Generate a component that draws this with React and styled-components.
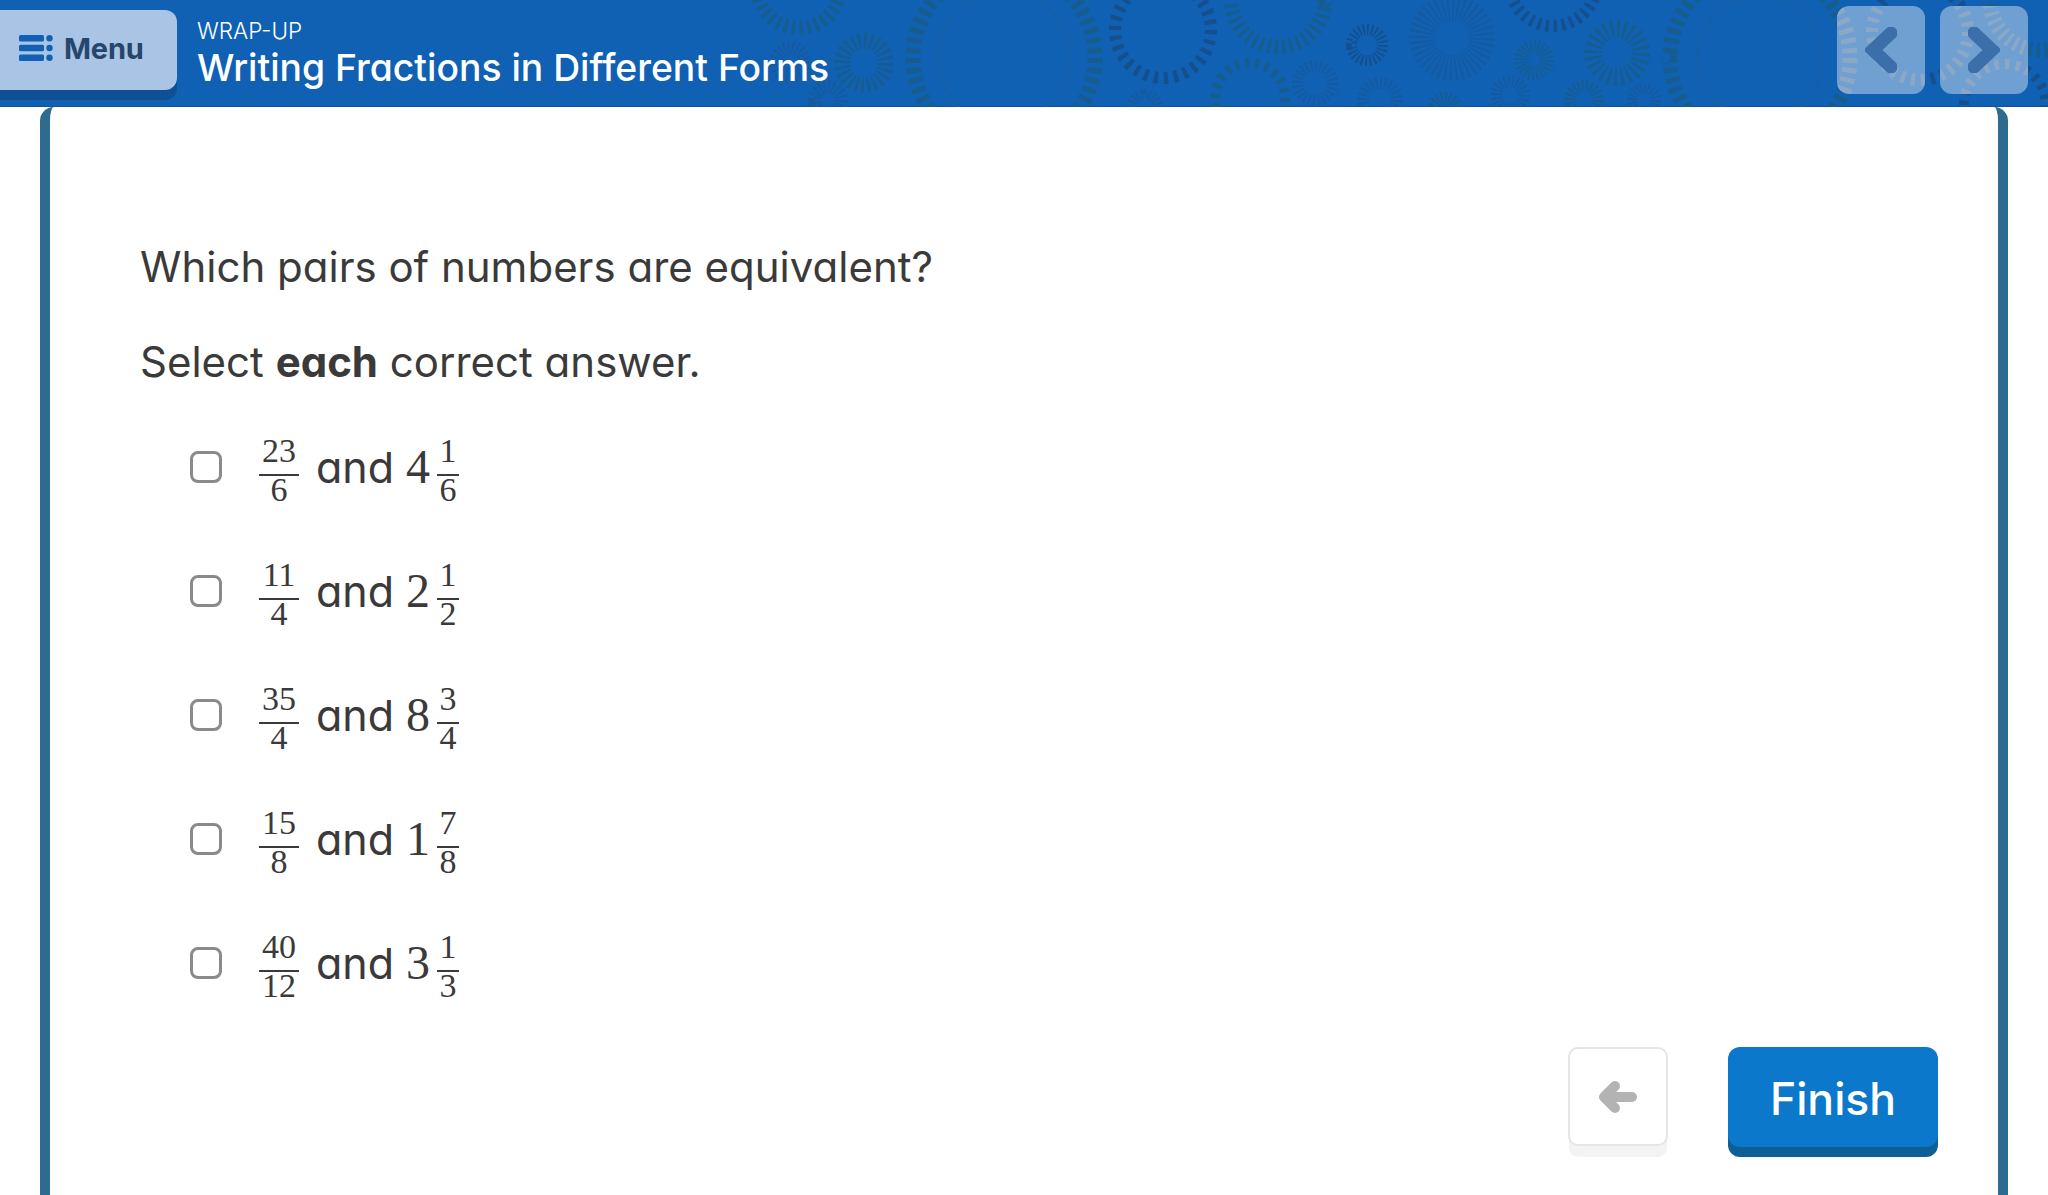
import styled, { createGlobalStyle } from "styled-components";

const GlobalStyle = createGlobalStyle`
  html, body { margin: 0; padding: 0; background: #fff; }
  body { font-family: Inter, "Noto Sans", sans-serif; font-feature-settings: "cv11"; color: #333; }
`;

const Page = styled.div`
  width: 2048px;
  height: 1195px;
  overflow: hidden;
  display: flex;
  flex-direction: column;
`;

const Header = styled.header`
  position: relative;
  flex: none;
  height: 107px;
  background: #1060b3;
  box-shadow: inset 0 -1px 0 #15508f;
  display: flex;
  align-items: flex-start;
  overflow: hidden;
`;

const Pattern = styled.svg`
  position: absolute;
  inset: 0;
`;

const MenuButton = styled.button`
  position: relative;
  flex: none;
  width: 177px;
  height: 80px;
  margin-top: 10px;
  padding: 0 0 4px 19px;
  border: 0;
  border-radius: 0 12px 12px 0;
  background: #a9c4e4;
  box-shadow: 0 10px 0 #0f4f94;
  display: flex;
  align-items: center;
  gap: 11px;
  font: 700 29px Inter, sans-serif;
  letter-spacing: -0.2px;
  color: #27466c;
`;

const TitleBlock = styled.div`
  position: relative;
  margin: 16px 0 0 20px;
  color: #fff;
`;

const Eyebrow = styled.div`
  font-size: 22.5px;
  font-weight: 300;
  line-height: 30px;
`;

const Title = styled.div`
  margin-top: -1px;
  font-size: 37.3px;
  font-weight: 500;
  line-height: 46px;
  white-space: nowrap;
`;

const NavGroup = styled.div`
  position: relative;
  margin: 6px 20px 0 auto;
  display: flex;
  gap: 15px;
`;

const NavButton = styled.button`
  position: relative;
  width: 88px;
  height: 88px;
  padding: 0;
  border: 0;
  border-radius: 12px;
  overflow: hidden;
  background: #70a0d1;
  display: flex;
  align-items: center;
  justify-content: center;
  svg:last-child { position: relative; }
`;

const Card = styled.main`
  flex: 1;
  margin: 0 40px;
  padding: 136px 61px 0 90px;
  border: solid #2f6b8f;
  border-width: 0 10px;
  border-radius: 14px 14px 0 0;
  background: #fff;
`;

const Prompt = styled.p`
  margin: 0 0 47px;
  font-size: 42px;
  line-height: 48px;
  font-weight: 400;
  color: #3a3a3a;
  strong { font-weight: 700; }
`;

const Options = styled.ul`
  list-style: none;
  margin: -28px 0 0;
  padding: 0 0 0 50px;
`;

const Option = styled.li`
  height: 124px;
  display: flex;
  align-items: center;
`;

const Check = styled.span`
  flex: none;
  box-sizing: border-box;
  width: 32px;
  height: 32px;
  margin-right: 37px;
  border: 3px solid #8a8a8a;
  border-radius: 8px;
`;

const Word = styled.span`
  width: 78px;
  margin: 0 12px 0 17px;
  font-size: 43px;
  line-height: 48px;
  color: #3a3a3a;
`;

const Whole = styled.span`
  width: 23px;
  margin-right: 8px;
  font: 48px/48px "Liberation Serif", serif;
  text-align: center;
  color: #3a3a3a;
`;

const Fraction = styled.span`
  width: ${(p) => p.$width}px;
  margin-top: 18px;
  display: flex;
  flex-direction: column;
  align-items: center;
  font: 34px/26px "Liberation Serif", serif;
  color: #3a3a3a;
`;

const Numerator = styled.span`
  align-self: stretch;
  text-align: center;
  border-bottom: 2px solid #3a3a3a;
  height: 36px;
  margin-top: -6px;
`;

const Denominator = styled.span`
  height: 32px;
  padding-top: 1px;
  box-sizing: border-box;
`;

const Footer = styled.div`
  margin-top: 22px;
  display: flex;
  justify-content: flex-end;
  gap: 60px;
`;

const BackButton = styled.button`
  box-sizing: border-box;
  width: 100px;
  height: 99px;
  padding: 0;
  border: 2px solid #e6e6e6;
  border-radius: 10px;
  background: #fff;
  box-shadow: 0 12px 0 -1px #f3f3f3;
  display: flex;
  align-items: center;
  justify-content: center;
`;

const FinishButton = styled.button`
  width: 210px;
  height: 100px;
  margin-right: -1px;
  padding: 3px 0 0;
  border: 0;
  border-radius: 12px;
  background: #0b78cc;
  box-shadow: 0 10px 0 #0e5f96;
  color: #fff;
  font: 500 44.5px Inter, sans-serif;
`;

const teal = "#165d8e";
const navy = "#154f8c";
const soft = "#155aa0";
const faint = "#155fa9";

// [cx, cy, r, radial length, dash count, colour]
const rings = [
  [799, -14, 42, 14, 34, teal],
  [790, 62, 14, 14, 22, soft],
  [864, 63, 22, 16, 24, teal],
  [828, 100, 13, 14, 20, soft],
  [1004, 58, 91, 15, 57, teal],
  [1004, 58, 66, 5, 60, faint],
  [1163, 30, 48, 12, 30, navy],
  [1278, 0, 47, 15, 40, teal],
  [1250, 98, 35, 10, 22, teal],
  [1145, 107, 13, 10, 20, soft],
  [1367, 45, 15.5, 11, 24, navy],
  [1315, 83, 17.5, 11, 24, soft],
  [1380, 100, 17, 12, 24, soft],
  [1452, 38, 30, 26, 40, soft],
  [1553, -18, 44, 12, 34, navy],
  [1534, 60, 13, 14, 24, teal],
  [1617, 53, 24, 18, 24, teal],
  [1510, 95, 14, 12, 22, soft],
  [1584, 100, 14, 12, 22, teal],
  [1644, 100, 12, 10, 20, soft],
  [1445, 110, 12, 12, 20, teal],
  [1760, 58, 90, 15, 57, teal],
  [1760, 58, 62, 5, 60, faint],
  [1920, 32, 48, 12, 30, navy],
  [2040, 0, 50, 15, 40, teal],
  [2005, 105, 41, 10, 24, navy],
];

function Rings({ color }) {
  return rings.map(([cx, cy, r, w, n, tone]) => (
    <circle
      key={`${cx}-${r}`}
      cx={cx}
      cy={cy}
      r={r}
      stroke={color && tone !== faint ? color : tone}
      strokeWidth={w}
      pathLength={n}
      strokeDasharray={r > 60 ? "0.5 0.5" : "0.42 0.58"}
    />
  ));
}

function MenuIcon() {
  return (
    <svg width="34" height="26" viewBox="0 0 34 26" fill="#1060b3">
      <rect x="0" y="0" width="25" height="6.5" rx="1.5" />
      <rect x="0" y="9.7" width="25" height="6.5" rx="1.5" />
      <rect x="0" y="19.5" width="25" height="6.5" rx="1.5" />
      <circle cx="30.5" cy="3.2" r="3.2" />
      <circle cx="30.5" cy="13" r="3.2" />
      <circle cx="30.5" cy="22.8" r="3.2" />
    </svg>
  );
}

function Chevron({ flip }) {
  return (
    <svg width="32" height="46" viewBox="0 0 32 46" fill="none">
      <path
        d={flip ? "M6 6 L24 23 L6 40" : "M26 6 L8 23 L26 40"}
        stroke="#3c6fa9"
        strokeWidth="13"
        strokeLinejoin="miter"
        strokeLinecap="round"
      />
    </svg>
  );
}

function BackArrow() {
  return (
    <svg width="38" height="32" viewBox="0 0 38 32" fill="none" stroke="#b3b3b3" strokeWidth="10" strokeLinecap="round" strokeLinejoin="round">
      <path d="M8 16 H33" />
      <path d="M16 5 L5 16 L16 27" />
    </svg>
  );
}

const items = [
  { n: "23", d: "6", whole: "4", fn: "1", fd: "6" },
  { n: "11", d: "4", whole: "2", fn: "1", fd: "2" },
  { n: "35", d: "4", whole: "8", fn: "3", fd: "4" },
  { n: "15", d: "8", whole: "1", fn: "7", fd: "8" },
  { n: "40", d: "12", whole: "3", fn: "1", fd: "3" },
];

export default function App() {
  return (
    <Page>
      <GlobalStyle />
      <Header>
        <Pattern width="2048" height="107" viewBox="0 0 2048 107" fill="none">
          <Rings />
        </Pattern>
        <MenuButton>
          <MenuIcon />
          Menu
        </MenuButton>
        <TitleBlock>
          <Eyebrow>WRAP-UP</Eyebrow>
          <Title>Writing Fractions in Different Forms</Title>
        </TitleBlock>
        <NavGroup>
          <NavButton>
            <Pattern width="88" height="88" viewBox="1837 6 88 88" fill="none">
              <Rings color="#8ba9c6" />
            </Pattern>
            <Chevron />
          </NavButton>
          <NavButton>
            <Pattern width="88" height="88" viewBox="1940 6 88 88" fill="none">
              <Rings color="#8ba9c6" />
            </Pattern>
            <Chevron flip />
          </NavButton>
        </NavGroup>
      </Header>
      <Card>
        <Prompt>Which pairs of numbers are equivalent?</Prompt>
        <Prompt>Select <strong>each</strong> correct answer.</Prompt>
        <Options>
          {items.map((item) => (
            <Option key={item.n}>
              <Check />
              <Fraction $width={40}>
                <Numerator>{item.n}</Numerator>
                <Denominator>{item.d}</Denominator>
              </Fraction>
              <Word>and</Word>
              <Whole>{item.whole}</Whole>
              <Fraction $width={22}>
                <Numerator>{item.fn}</Numerator>
                <Denominator>{item.fd}</Denominator>
              </Fraction>
            </Option>
          ))}
        </Options>
        <Footer>
          <BackButton><BackArrow /></BackButton>
          <FinishButton>Finish</FinishButton>
        </Footer>
      </Card>
    </Page>
  );
}
